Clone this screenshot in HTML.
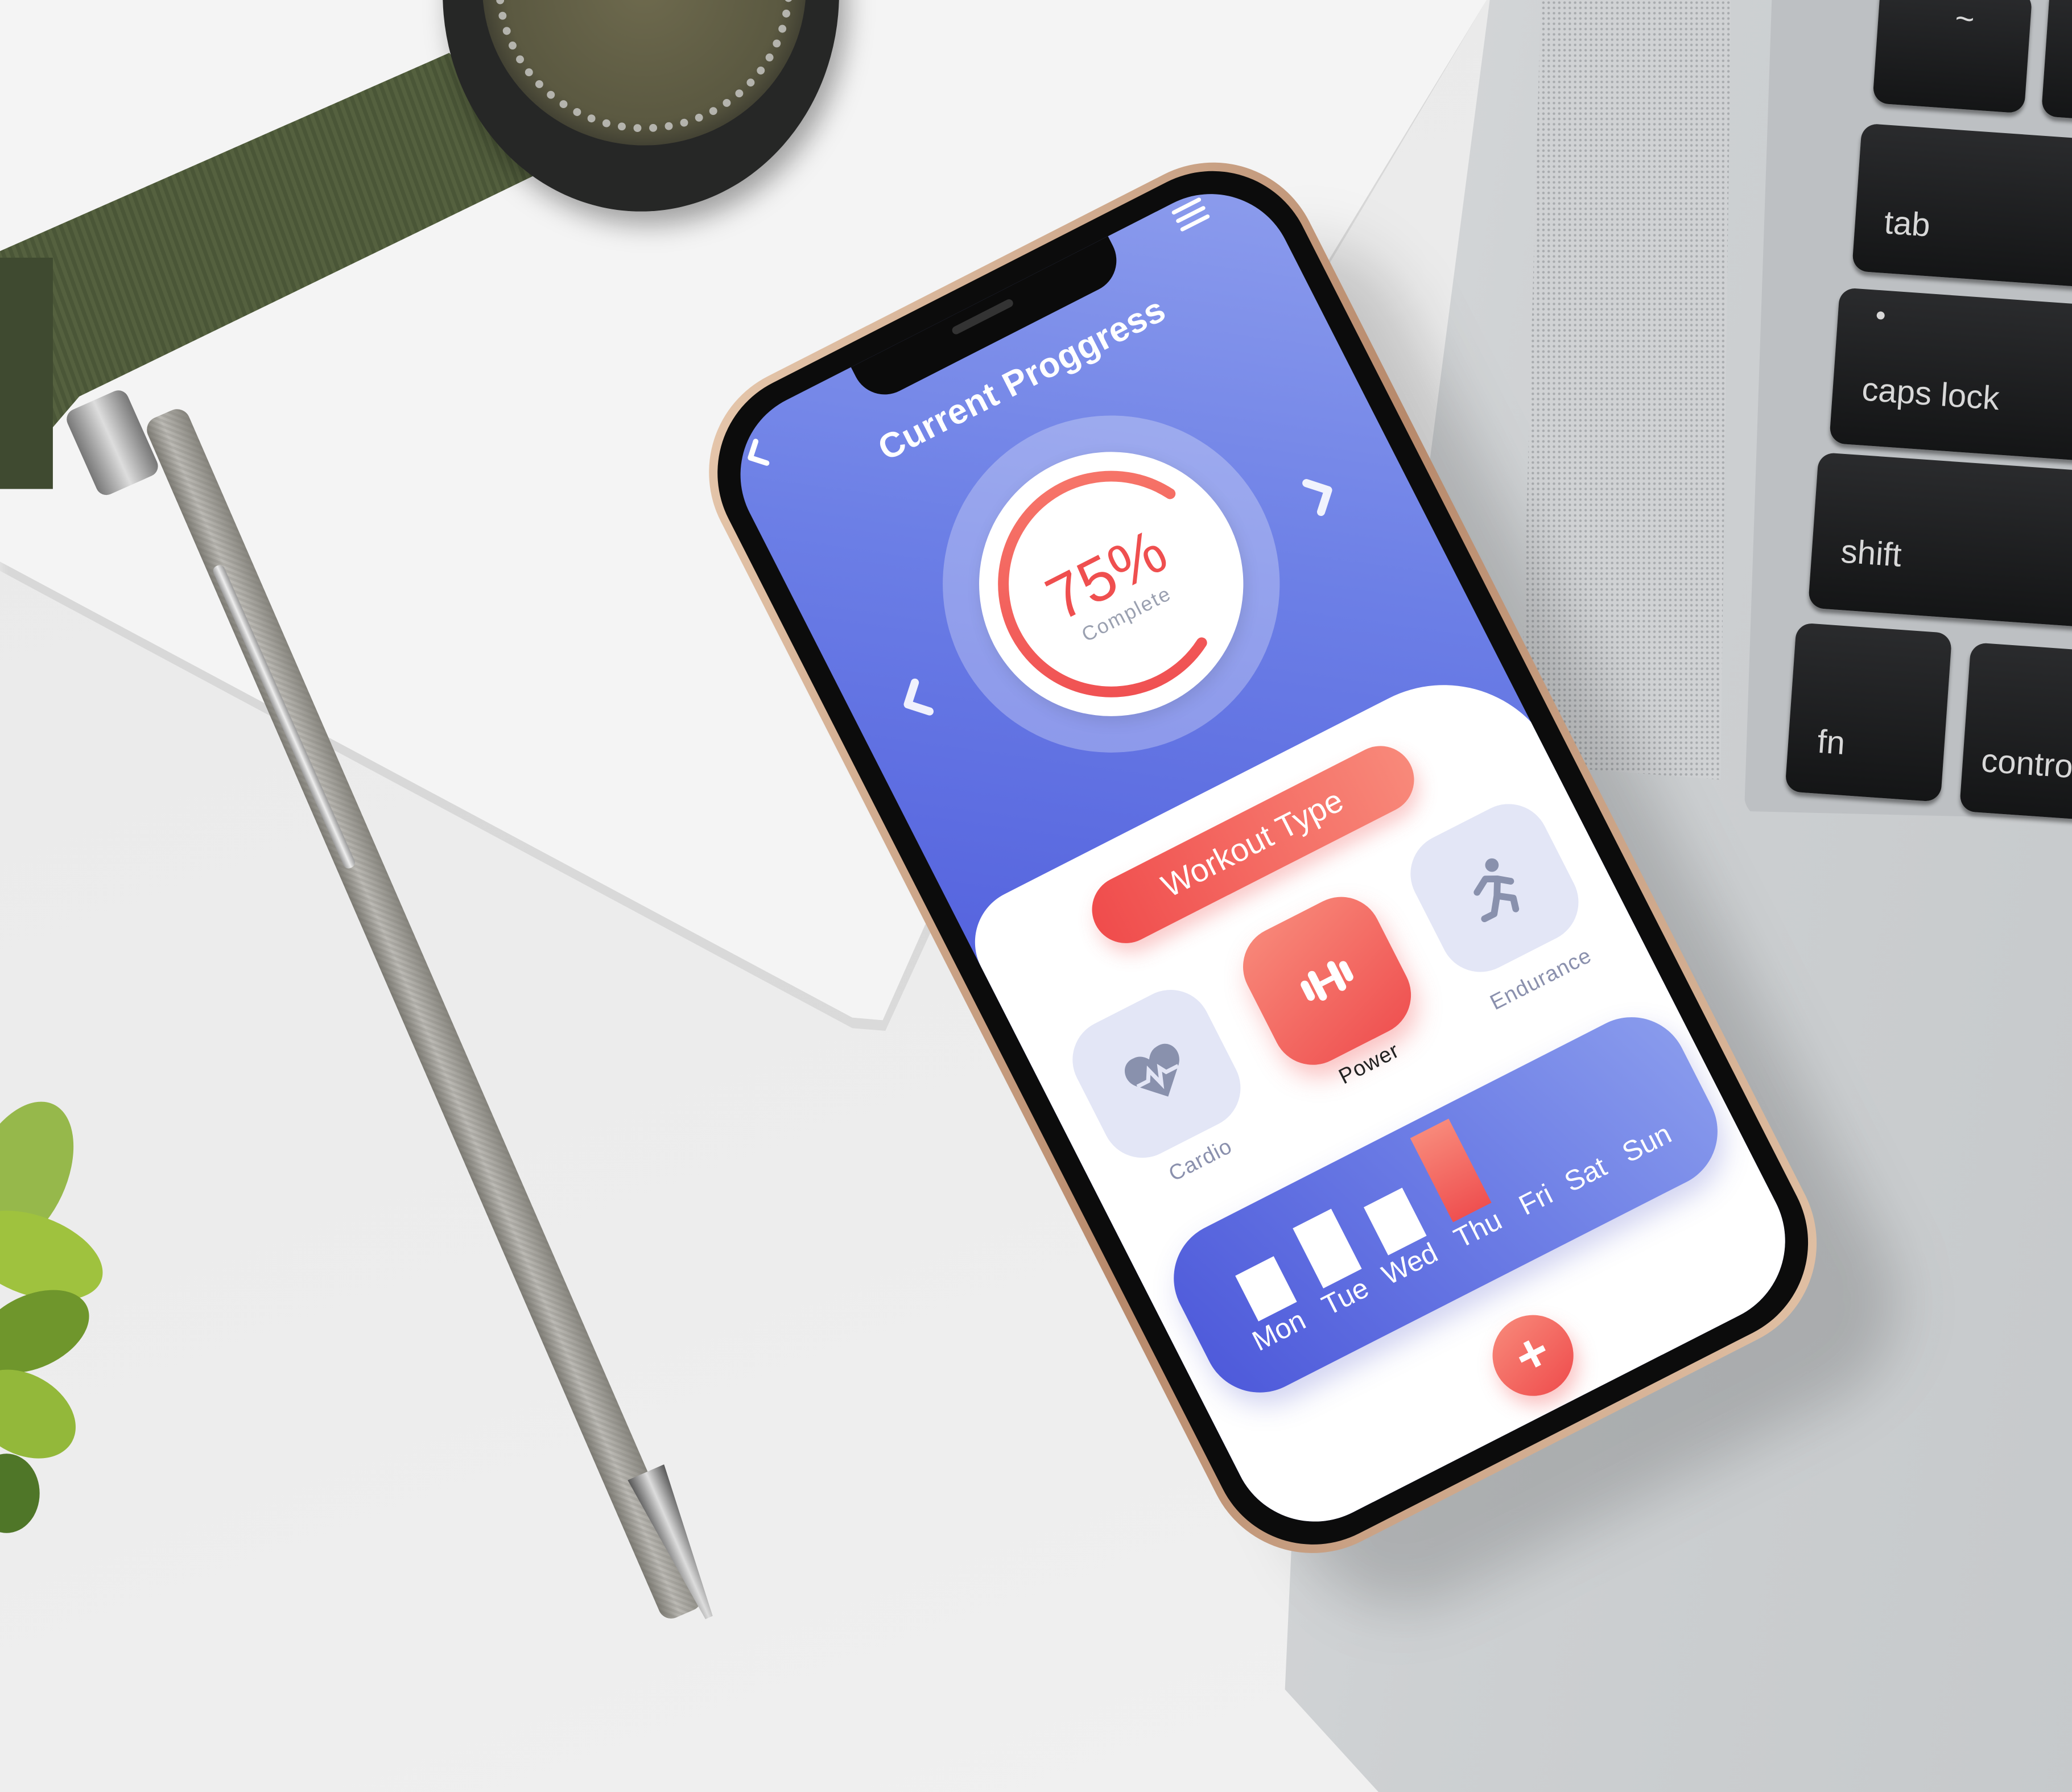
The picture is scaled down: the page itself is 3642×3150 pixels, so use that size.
<!DOCTYPE html>
<html><head><meta charset="utf-8">
<style>
html,body{margin:0;padding:0;}
body{width:3642px;height:3150px;overflow:hidden;background:#eeeeee;font-family:"Liberation Sans",sans-serif;}
#s{position:absolute;left:0;top:0;width:1568px;height:1356px;transform:scale(2.32270,2.32301);transform-origin:0 0;overflow:hidden;background:linear-gradient(160deg,#e9e9e9,#ededed 60%,#f1f1f1);}
.abs{position:absolute;}
.key{position:absolute;background:linear-gradient(180deg,#2a2b2d,#141516);border-radius:12px;color:#d8d8d8;font-size:25px;box-shadow:0 3px 3px rgba(0,0,0,.4);}
.key span{position:absolute;}
#phone{position:absolute;left:706px;top:165px;width:490px;height:970px;transform-origin:245px 475px;transform:rotate(-27deg) scale(1.02);}
.scr{position:absolute;left:22px;top:22px;width:446px;height:926px;border-radius:62px;overflow:hidden;background:linear-gradient(215deg,#8d9ded 0%,#6c7fe6 30%,#4e5bdc 70%,#4350d6 100%);}
.lbl{position:absolute;font-size:16px;letter-spacing:.5px;text-align:center;width:120px;}
.tile{position:absolute;width:108px;height:108px;border-radius:30px;}
.day{position:absolute;color:#fff;font-size:21px;top:82px;}
.bar{position:absolute;background:#fff;width:32px;bottom:52px;}
</style></head><body><div id="s">
<!-- paper shadow -->
<div class="abs" style="left:0;top:0;width:1568px;height:1356px;background:rgba(0,0,0,.08);clip-path:polygon(0 0,1125px 0,704px 706px,670px 780px,645px 778px,0 432px);filter:blur(4px);"></div>
<!-- paper -->
<div class="abs" style="left:0;top:0;width:1568px;height:1356px;background:#f4f4f4;clip-path:polygon(0 0,1125px 0,700px 700px,668px 772px,645px 770px,0 425px);"></div>
<!-- laptop -->
<div class="abs" style="left:960px;top:0;width:620px;height:1360px;background:linear-gradient(100deg,#d6d8da,#cdd0d2 40%,#c6c9cb);clip-path:polygon(27% 0,100% 0,100% 100%,14% 100%,2% 94%,3% 84%);"></div>
<div class="abs" style="left:1150px;top:0;width:160px;height:590px;background-image:radial-gradient(#a8abae 0.8px,transparent 1.1px);background-size:4px 4px;background-color:#d0d2d4;clip-path:polygon(10% 0,100% 0,95% 100%,0 98%);"></div>
<div class="abs" style="left:1320px;top:0;width:260px;height:620px;background:#bdc0c3;border-radius:0 0 0 18px;clip-path:polygon(8% 0,100% 0,100% 100%,0 99%);"></div>
<div class="key" style="left:1420px;top:-10px;width:115px;height:92px;transform:rotate(4deg)"><span style="left:58px;top:10px">~</span></div>
<div class="key" style="left:1548px;top:-10px;width:60px;height:100px;transform:rotate(4deg)"></div>
<div class="key" style="left:1405px;top:100px;width:200px;height:112px;transform:rotate(4deg)"><span style="left:22px;top:60px">tab</span></div>
<div class="key" style="left:1388px;top:225px;width:220px;height:118px;transform:rotate(4deg)"><span style="left:28px;top:10px;font-size:14px">●</span><span style="left:22px;top:62px">caps lock</span></div>
<div class="key" style="left:1372px;top:350px;width:230px;height:118px;transform:rotate(4deg)"><span style="left:22px;top:60px">shift</span></div>
<div class="key" style="left:1355px;top:475px;width:118px;height:128px;transform:rotate(4deg)"><span style="left:22px;top:75px">fn</span></div>
<div class="key" style="left:1487px;top:490px;width:120px;height:128px;transform:rotate(4deg)"><span style="left:14px;top:75px">contro</span></div>
<!-- watch -->
<div class="abs" style="left:0;top:0;width:520px;height:400px;background:repeating-linear-gradient(70deg,#4a5637 0 3px,#55613f 3px 6px);clip-path:polygon(0 190px,340px 40px,410px 130px,60px 300px,0 370px);"></div>
<div class="abs" style="left:0;top:195px;width:40px;height:175px;background:#3f4a30;"></div>
<div class="abs" style="left:335px;top:-170px;width:300px;height:330px;border-radius:50%;background:#262726;box-shadow:6px 10px 20px rgba(0,0,0,.35);"></div>
<div class="abs" style="left:365px;top:-130px;width:245px;height:240px;border-radius:50%;background:radial-gradient(#6e6a4e,#5b5941 60%,#2e2e28 80%);"></div>
<div class="abs" style="left:375px;top:-120px;width:225px;height:220px;border-radius:50%;border:6px dotted #ddd;box-sizing:border-box;opacity:.7;"></div>
<div class="abs" style="left:60px;top:300px;width:50px;height:70px;background:linear-gradient(90deg,#777,#ddd,#777);border-radius:8px;transform:rotate(-24deg);"></div>
<!-- pen -->
<div class="abs" style="left:108px;top:320px;width:34px;height:990px;background-image:linear-gradient(90deg,rgba(120,118,110,.9),rgba(200,197,188,.6) 40%,rgba(130,128,120,.9)),repeating-linear-gradient(45deg,#aaa 0 2px,#888 2px 4px);transform:rotate(-23.5deg);transform-origin:0 0;border-radius:10px;"></div>
<div class="abs" style="left:475px;top:1120px;width:30px;height:120px;background:linear-gradient(90deg,#555,#ddd,#555);transform:rotate(-23.5deg);transform-origin:0 0;clip-path:polygon(0 0,100% 0,60% 100%,40% 100%);"></div>
<div class="abs" style="left:160px;top:430px;width:9px;height:250px;background:linear-gradient(90deg,#999,#eee,#999);transform:rotate(-24deg);transform-origin:0 0;border-radius:4px;"></div>
<!-- plant -->
<div class="abs" style="left:-20px;top:830px;width:70px;height:120px;background:#8db33a;border-radius:50%;transform:rotate(25deg);opacity:.9;"></div>
<div class="abs" style="left:-30px;top:920px;width:110px;height:60px;background:#9fc23e;border-radius:50%;transform:rotate(20deg);"></div>
<div class="abs" style="left:-20px;top:980px;width:90px;height:55px;background:#6f962c;border-radius:50%;transform:rotate(-25deg);"></div>
<div class="abs" style="left:-25px;top:1040px;width:85px;height:60px;background:#93b83a;border-radius:50%;transform:rotate(30deg);"></div>
<div class="abs" style="left:-20px;top:1100px;width:50px;height:60px;background:#4f7628;border-radius:50%;"></div>
<!-- phone shadow -->
<div class="abs" style="left:780px;top:215px;width:490px;height:970px;border-radius:80px;background:rgba(0,0,0,.16);filter:blur(22px);transform:rotate(-27deg);"></div>
<div id="phone">
 <div class="abs" style="inset:0;border-radius:80px;background:linear-gradient(135deg,#e7c9ae,#b7896b 50%,#e2c2a6);"></div>
 <div class="abs" style="inset:6px;border-radius:75px;background:#0c0c0c;"></div>
 <div class="scr">
  <div class="abs" style="left:0;top:400px;width:450px;height:560px;background:#fff;border-top-right-radius:90px;border-top-left-radius:40px;"></div>
  <div class="abs" style="left:116px;top:-2px;width:214px;height:34px;background:#0b0b0b;border-radius:0 0 24px 24px;"></div>
  <div class="abs" style="left:195px;top:8px;width:50px;height:6px;background:#333;border-radius:3px;"></div>
  <svg class="abs" style="left:14px;top:14px" width="20" height="24" viewBox="0 0 20 24"><path d="M14 3 L5 12 L14 21" stroke="#fff" stroke-width="4" fill="none" stroke-linecap="round" stroke-linejoin="round"/></svg>
  <div class="abs" style="left:380px;top:2px;width:24px;">
   <div style="height:3px;background:#fff;margin:3px 0;border-radius:2px"></div>
   <div style="height:3px;background:#fff;margin:4px 0;border-radius:2px"></div>
   <div style="height:3px;background:#fff;margin:4px 0;border-radius:2px"></div>
  </div>
  <div class="abs" style="left:0;width:450px;top:50px;text-align:center;color:#fff;font-size:26px;font-weight:bold;letter-spacing:.3px;">Current Proggress</div>
  <div class="abs" style="left:90px;top:106px;width:250px;height:250px;border-radius:50%;background:rgba(255,255,255,.28);"></div>
  <div class="abs" style="left:117px;top:133px;width:196px;height:196px;border-radius:50%;background:#fff;box-shadow:0 4px 12px rgba(0,0,0,.1);"></div>
  <svg class="abs" style="left:90px;top:106px" width="250" height="250" viewBox="0 0 250 250">
   <defs><linearGradient id="rg" x1="0" y1="0" x2="1" y2="1"><stop offset="0" stop-color="#f77b6d"/><stop offset="1" stop-color="#ef4a4e"/></linearGradient></defs>
   <circle cx="125" cy="125" r="80" fill="none" stroke="url(#rg)" stroke-width="8" stroke-linecap="round" stroke-dasharray="377 503" transform="rotate(60 125 125)"/>
  </svg>
  <div class="abs" style="left:0;width:430px;top:196px;text-align:center;color:#ef4f4f;font-size:46px;">75%</div>
  <div class="abs" style="left:0;width:430px;top:248px;text-align:center;color:#9aa0b0;font-size:15px;letter-spacing:1px;">Complete</div>
  <svg class="abs" style="left:372px;top:226px" width="24" height="32" viewBox="0 0 24 32"><path d="M6 4 L18 16 L6 28" stroke="#fff" stroke-width="6" fill="none" stroke-linecap="round" stroke-linejoin="round" opacity=".9"/></svg>
  <svg class="abs" style="left:34px;top:226px" width="24" height="32" viewBox="0 0 24 32"><path d="M18 4 L6 16 L18 28" stroke="#fff" stroke-width="6" fill="none" stroke-linecap="round" stroke-linejoin="round" opacity=".9"/></svg>
  <div class="abs" style="left:90px;top:426px;width:262px;height:50px;border-radius:25px;background:linear-gradient(90deg,#f04c4c,#f8897a);color:#fff;font-size:24px;text-align:center;line-height:50px;box-shadow:0 8px 14px rgba(240,80,80,.3);">Workout Type</div>
  <div class="tile" style="left:26px;top:516px;background:#e3e6f6;"></div>
  <svg class="abs" style="left:55px;top:545px" width="50" height="50" viewBox="0 0 50 50"><path d="M25 44 L7 26 C0 18 5 6 15 7 C20 7 23 10 25 13 C27 10 30 7 35 7 C45 6 50 18 43 26 Z" fill="#8991ad"/><path d="M8 27 H17 L21 20 L25 33 L29 22 L32 27 H42" stroke="#e3e6f6" stroke-width="3" fill="none"/></svg>
  <div class="tile" style="left:170px;top:512px;background:linear-gradient(160deg,#f8897a,#ef5050);box-shadow:0 10px 18px rgba(240,80,80,.35);"></div>
  <svg class="abs" style="left:199px;top:541px" width="50" height="50" viewBox="0 0 50 50" fill="#fff"><rect x="6" y="17" width="6" height="16" rx="3"/><rect x="14" y="13" width="6" height="24" rx="3"/><rect x="30" y="13" width="6" height="24" rx="3"/><rect x="38" y="17" width="6" height="16" rx="3"/><rect x="20" y="23" width="10" height="4"/></svg>
  <div class="tile" style="left:312px;top:507px;background:#e3e6f6;"></div>
  <svg class="abs" style="left:341px;top:536px" width="50" height="50" viewBox="0 0 50 50"><circle cx="31" cy="9" r="5" fill="#8991ad"/><path d="M12 22 L22 16 L30 20 L38 26 M30 20 L24 31 L34 38 L32 46 M24 31 L16 42 L8 42" stroke="#8991ad" stroke-width="5" stroke-linecap="round" stroke-linejoin="round" fill="none"/></svg>
  <div class="lbl" style="left:20px;top:634px;color:#8a90ad;">Cardio</div>
  <div class="lbl" style="left:164px;top:627px;color:#222;">Power</div>
  <div class="lbl" style="left:306px;top:629px;color:#8a90ad;">Endurance</div>
  <div class="abs" style="left:18px;top:688px;width:418px;height:132px;border-radius:42px;background:linear-gradient(70deg,#4d59da,#6f80e6 60%,#8a9ced);box-shadow:0 10px 20px rgba(70,80,200,.25);">
   <div class="bar" style="left:46px;height:38px;"></div>
   <div class="bar" style="left:100px;height:50px;"></div>
   <div class="bar" style="left:154px;height:40px;"></div>
   <div class="bar" style="left:208px;height:70px;background:linear-gradient(0deg,#ef5050,#f8897a);"></div>
   <div class="day" style="left:36px;">Mon</div>
   <div class="day" style="left:94px;">Tue</div>
   <div class="day" style="left:144px;">Wed</div>
   <div class="day" style="left:204px;">Thu</div>
   <div class="day" style="left:258px;">Fri</div>
   <div class="day" style="left:296px;">Sat</div>
   <div class="day" style="left:344px;">Sun</div>
  </div>
  <div class="abs" style="left:204px;top:853px;width:60px;height:60px;border-radius:50%;background:linear-gradient(160deg,#f8897a,#ef4d4d);box-shadow:0 8px 14px rgba(240,80,80,.35);color:#fff;font-size:40px;font-weight:bold;text-align:center;line-height:58px;">+</div>
 </div>
</div>
</div></body></html>
